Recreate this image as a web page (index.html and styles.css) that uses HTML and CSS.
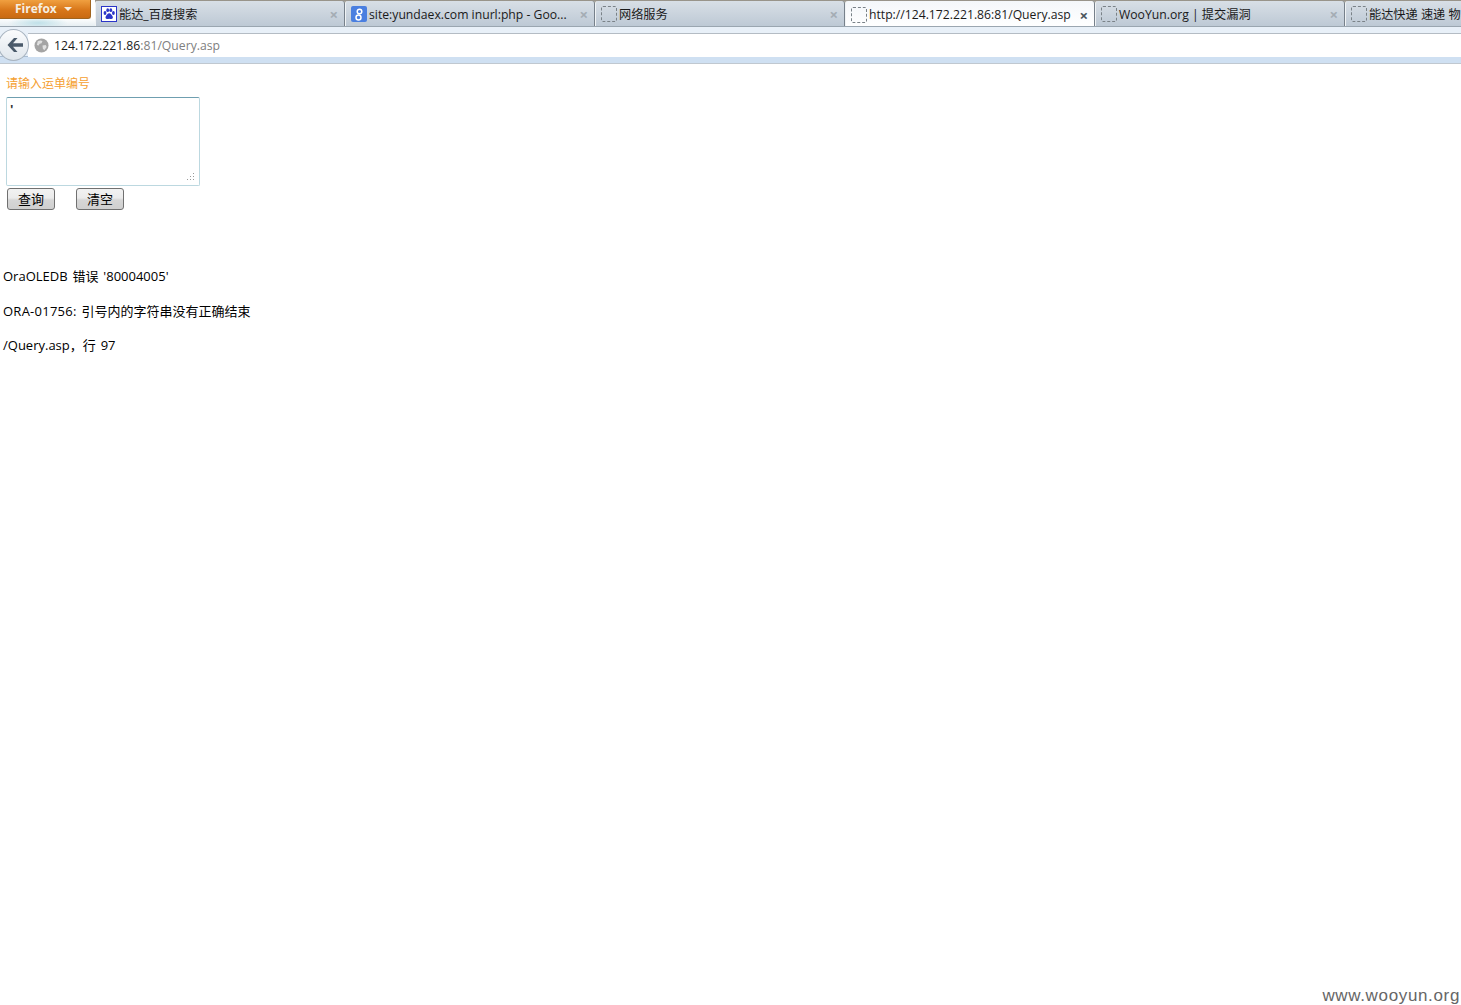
FILE: index.html
```html
<!DOCTYPE html>
<html>
<head>
    <title>Query</title>
    <link rel="stylesheet" href="styles.css">
</head>
<body>
    <div class="tab-bar">
        <div class="firefox-slot">
            <div class="firefox-button">Firefox <span class="firefox-arrow"></span></div>
        </div>
        <div class="tab">
            <svg class="favicon" viewBox="0 0 16 16">
                <rect x="0.5" y="0.5" width="15" height="15" fill="#fff" stroke="#2b35c8"/>
                <g fill="#2b35c8">
                    <ellipse cx="4" cy="7" rx="1.4" ry="1.9"/>
                    <ellipse cx="6.7" cy="4.2" rx="1.4" ry="1.9"/>
                    <ellipse cx="9.8" cy="4.2" rx="1.4" ry="1.9"/>
                    <ellipse cx="12.4" cy="7" rx="1.4" ry="1.9"/>
                    <path d="M8.2 7.2c1.7 0 2.2 1.7 3.2 2.7 1 1.2.4 3.2-1.3 3.1-.7 0-1.2-.3-1.9-.3s-1.3.3-2 .3c-1.700 0-2.200-2-1.200-3.100 1-1 1.500-2.700 3.200-2.700z"/>
                </g>
            </svg>
            <span class="tab-title">能达_百度搜索</span>
            <span class="tab-close">×</span>
        </div>
        <div class="tab">
            <svg class="favicon" viewBox="0 0 16 16">
                <rect width="16" height="16" rx="2" fill="#4a7fe0"/>
                <circle cx="8.500" cy="5.500" r="2.300" fill="none" stroke="#fff" stroke-width="1.500"/>
                <circle cx="7.500" cy="11.500" r="2.500" fill="none" stroke="#fff" stroke-width="1.500"/>
            </svg>
            <span class="tab-title">site:yundaex.com inurl:php - Goo...</span>
            <span class="tab-close">×</span>
        </div>
        <div class="tab">
            <span class="favicon-blank"></span>
            <span class="tab-title">网络服务</span>
            <span class="tab-close">×</span>
        </div>
        <div class="tab tab-active">
            <span class="favicon-blank"></span>
            <span class="tab-title">http://124.172.221.86:81/Query.asp</span>
            <span class="tab-close">×</span>
        </div>
        <div class="tab">
            <span class="favicon-blank"></span>
            <span class="tab-title">WooYun.org | 提交漏洞</span>
            <span class="tab-close">×</span>
        </div>
        <div class="tab tab-last">
            <span class="favicon-blank"></span>
            <span class="tab-title">能达快递 速递 物</span>
        </div>
    </div>

    <div class="nav-bar">
        <div class="back-button">
            <svg viewBox="0 0 18 16" width="18" height="16">
                <path d="M8 1 1.500 8 8 15h3.500L7 9.800h10V6.200H7L11.500 1z" fill="#4a5a6a"/>
            </svg>
        </div>
        <div class="url-bar">
            <svg class="globe" viewBox="0 0 16 16">
                <circle cx="8" cy="8" r="7.500" fill="#a4a4a4"/>
                <path d="M4 3.500c2-1 4-1 5 0l-1 2-2 .5-1 2-2-.500zM9 8l3.500-.5 1 2-2.500 3.500-1.500-1.500z" fill="#e0e0e0"/>
            </svg>
            <span class="url-host">124.172.221.86</span><span class="url-rest">:81/Query.asp</span>
        </div>
    </div>
    <div class="nav-strip"></div>

    <div class="page">
        <div class="query-form">
            <div class="query-label">请输入运单编号</div>
            <div class="query-box">
                <span class="query-value">'</span>
                <svg class="resize-grip" viewBox="0 0 9 9">
                    <g fill="#9a9a9a">
                        <rect x="7" y="1" width="1" height="1"/>
                        <rect x="4" y="4" width="1" height="1"/>
                        <rect x="7" y="4" width="1" height="1"/>
                        <rect x="1" y="7" width="1" height="1"/>
                        <rect x="4" y="7" width="1" height="1"/>
                        <rect x="7" y="7" width="1" height="1"/>
                    </g>
                </svg>
            </div>
            <div class="query-buttons">
                <button class="query-btn">查询</button>
                <button class="query-btn">清空</button>
            </div>
        </div>

        <p class="error-line">OraOLEDB 错误 '80004005'</p>
        <p class="error-line"><span class="error-code">ORA-01756:</span> 引号内的字符串没有正确结束</p>
        <p class="error-line">/Query.asp，行 97</p>
    </div>

    <div class="watermark">www.wooyun.org</div>
</body>
</html>
```

FILE: styles.css
```css
html, body {
    margin: 0;
    padding: 0;
}

body {
    position: relative;
    height: 1005px;
    overflow: hidden;
    background: #ffffff;
    font-family: "Open Sans", "Noto Sans CJK SC", sans-serif;
    color: #000000;
}

.tab-bar {
    display: flex;
    height: 27px;
    overflow: hidden;
    background: linear-gradient(#8f8a80 0, #c9c6bd 3px, #dfe3e6 100%);
    border-bottom: 1px solid #9aa6b0;
    box-sizing: border-box;
}

.firefox-slot {
    width: 95px;
    flex-shrink: 0;
    background:
        radial-gradient(ellipse 30px 6px at 38px 23px, #bfe0e8, transparent),
        linear-gradient(#ffffff 0, #ffffff 18px, #e6eef2 100%);
}

.firefox-button {
    width: 91px;
    height: 19px;
    box-sizing: border-box;
    padding-left: 15px;
    border-right: 1px solid #a0641f;
    border-bottom: 1px solid #a0641f;
    border-radius: 0 0 3px 0;
    background: linear-gradient(#f0a040, #d8771a 55%, #c96a12);
    color: #f6efe2;
    font-size: 12px;
    font-weight: 700;
    line-height: 17px;
}

.firefox-arrow {
    display: inline-block;
    margin-left: 4px;
    vertical-align: 2px;
    border-left: 4px solid transparent;
    border-right: 4px solid transparent;
    border-top: 4px solid #f6efe2;
}

.tab {
    display: flex;
    align-items: center;
    flex-shrink: 0;
    width: 250px;
    height: 26px;
    margin-top: 1px;
    box-sizing: border-box;
    padding: 0 6px 0 5px;
    background: linear-gradient(#d8dfe6, #bcc8d4);
    border-right: 1px solid #76808a;
    border-left: 1px solid #f0f3f5;
    border-radius: 3px 3px 0 0;
    font-size: 12.200px;
    color: #1a1a1a;
}

.tab-active {
    background: linear-gradient(#f4f7fa, #ffffff);
    height: 27px;
}

.tab-last {
    border-right: none;
}

.tab-title {
    flex: 1;
    margin-left: 2px;
    white-space: nowrap;
}

.tab-close {
    font-size: 15px;
    font-weight: 700;
    color: #a4acb4;
    line-height: 14px;
}

.tab-active .tab-close {
    color: #4a545e;
}

.favicon {
    width: 16px;
    height: 16px;
    flex-shrink: 0;
}

.favicon-blank {
    width: 14px;
    height: 14px;
    flex-shrink: 0;
    border: 1px dashed #7a8288;
    border-radius: 2px;
}

.nav-bar {
    display: flex;
    align-items: center;
    height: 29px;
    box-sizing: border-box;
    padding-top: 6px;
    background: #e8f0f8;
}

.back-button {
    display: flex;
    align-items: center;
    justify-content: center;
    width: 31px;
    height: 32px;
    margin: -6px 0 -6px -2px;
    padding-left: 2px;
    flex-shrink: 0;
    box-sizing: border-box;
    border: 1px solid #a8b4c0;
    border-radius: 50%;
    background: linear-gradient(#fbfcfd, #dfe6ec);
    position: relative;
    z-index: 1;
}

.url-bar {
    display: flex;
    align-items: center;
    flex: 1;
    height: 23px;
    margin-left: -1px;
    padding-left: 6px;
    background: #ffffff;
    border-top: 1px solid #b4bcc4;
    font-size: 12.200px;
}

.globe {
    width: 15px;
    height: 15px;
    margin-right: 5px;
}

.url-host {
    color: #1a1a1a;
}

.url-rest {
    color: #808080;
}

.nav-strip {
    height: 8px;
    box-sizing: border-box;
    background: #cfe0f2;
    border-top: 1px solid #a9bdd2;
    border-bottom: 1px solid #c0c8d0;
}

.page {
    padding: 0 3px;
}

.query-form {
    padding: 11px 3px 0;
    height: 203px;
    box-sizing: border-box;
}

.query-label {
    height: 22px;
    font-size: 12px;
    line-height: 17px;
    color: #f5a030;
}

.query-box {
    position: relative;
    width: 194px;
    height: 89px;
    box-sizing: border-box;
    border: 1px solid #bcd8e0;
    border-top-color: #6f9fb0;
    border-radius: 2px;
    padding: 4px 3px;
    font-size: 13px;
    line-height: 15px;
}

.query-value {
    font-weight: 700;
    color: #333333;
}

.resize-grip {
    position: absolute;
    right: 4px;
    bottom: 4px;
    width: 9px;
    height: 9px;
}

.query-buttons {
    display: flex;
    gap: 21px;
    margin: 2px 0 0 1px;
}

.query-btn {
    width: 48px;
    height: 22px;
    padding: 0 0 2px;
    border: 1px solid #707070;
    border-radius: 3px;
    background: linear-gradient(#f2f2f2 0, #ebebeb 45%, #d6d6d6 55%, #cfcfcf 100%);
    font-family: "Noto Sans CJK SC", sans-serif;
    font-size: 13px;
    color: #000000;
}

.error-line {
    margin: 0 0 16px;
    font-size: 13px;
    line-height: 18.500px;
    word-spacing: 1.500px;
}

.error-code {
    letter-spacing: 0.250px;
}

.watermark {
    position: absolute;
    right: 1px;
    bottom: -1px;
    font-family: "Liberation Sans", sans-serif;
    font-size: 17px;
    letter-spacing: 0.650px;
    line-height: 20px;
    color: #666666;
}
```
